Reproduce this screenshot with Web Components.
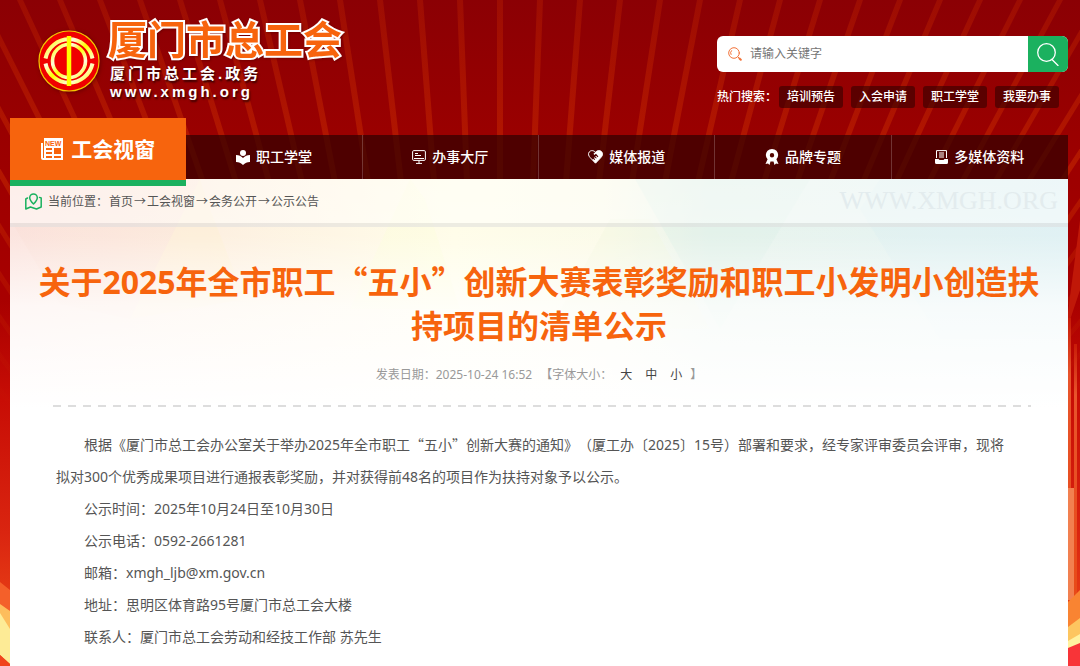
<!DOCTYPE html>
<html lang="zh-CN">
<head>
<meta charset="utf-8">
<meta name="viewport" content="width=device-width, initial-scale=1">
<title>厦门市总工会</title>
<style>
body {
    margin: 0;
    font: 12px/20px "Noto Sans", "Noto Sans CJK SC", sans-serif;
    text-spacing-trim: space-all;
    color: #555;
    background: #960000;
    --orange: #f7640d;
    --green: #1bb15f;
    --cjk: "Noto Sans CJK SC", sans-serif;
}
.cn { font-family: var(--cjk); }
</style>
</head>
<body>
<site-page>
    <site-logo slot="logo">
        厦门市总工会
        <span slot="sub">厦门市总工会.政务</span>
        <span slot="url">www.xmgh.org</span>
    </site-logo>
    <search-box slot="search" placeholder="请输入关键字"></search-box>
    <hot-words slot="search" label="热门搜索：" words="培训预告,入会申请,职工学堂,我要办事"></hot-words>
    <main-nav slot="nav">
        <nav-item icon="news" active>工会视窗</nav-item>
        <nav-item icon="reader">职工学堂</nav-item>
        <nav-item icon="monitor">办事大厅</nav-item>
        <nav-item icon="heart">媒体报道</nav-item>
        <nav-item icon="medal">品牌专题</nav-item>
        <nav-item icon="drawer">多媒体资料</nav-item>
    </main-nav>
    <crumb-bar label="当前位置：" path="首页,工会视窗,会务公开,公示公告">WWW.XMGH.ORG</crumb-bar>
    <notice-article>
        <span slot="title">关于2025年全市职工<span class="cn">“五小”</span>创新大赛表彰奖励和职工小发明小创造扶持项目的清单公示</span>
        <span slot="date">2025-10-24 16:52</span>
        <p>根据《厦门市总工会办公室关于举办2025年全市职工<span class="cn">“五小”</span>创新大赛的通知》（厦工办〔2025〕15号）部署和要求，经专家评审委员会评审，现将拟对300个优秀成果项目进行通报表彰奖励，并对获得前48名的项目作为扶持对象予以公示。</p>
        <p>公示时间：2025年10月24日至10月30日</p>
        <p>公示电话：0592-2661281</p>
        <p>邮箱：xmgh_ljb@xm.gov.cn</p>
        <p>地址：思明区体育路95号厦门市总工会大楼</p>
        <p>联系人：厦门市总工会劳动和经技工作部 苏先生</p>
    </notice-article>
</site-page>

<script>
const icons = {
    news: `<svg width="22" height="22" viewBox="0 0 22 22" fill="#fff">
        <path d="M0 5h2v15h1V0h19v22H2a2 2 0 0 1-2-2z"/>
        <path d="M5 10h6v2H5zM5 14h6v2H5zM5 18h6v2H5zM13 10h7v6h-7zM13 18h7v2h-7z" fill="#f7640d"/>
        <text x="4" y="8" font-family="Liberation Sans, sans-serif" font-size="7" font-weight="700" fill="#f7640d">NEW</text></svg>`,
    reader: `<svg width="14" height="15" viewBox="0 0 14 15" fill="#fff">
        <circle cx="7" cy="3" r="3"/><path d="M0 5c3 0 5 1 7 3 2-2 4-3 7-3v7c-3 0-5 1-7 3-2-2-4-3-7-3z"/></svg>`,
    monitor: `<svg width="14" height="14" viewBox="0 0 14 14" fill="none" stroke="#fff">
        <rect x=".6" y=".6" width="12.8" height="9.8" rx="1.2"/><path d="M3 3.5h3M3 5.5h6M2 8.5h10M7 10.5v3M4 13.4h6"/></svg>`,
    heart: `<svg width="15" height="14" viewBox="0 0 15 14">
        <path d="M7.5 2.3C5.8.3 2.8 0 1.3 1.9-.2 3.8.6 6 2.2 7.600l5.300 5.600 5.300-5.600c1.600-1.600 2.300-3.900.9-5.700C12.200 0 9.200.3 7.500 2.300z" fill="none" stroke="#fff"/>
        <path d="M5.500 3.800L8 1.600C9.500 0 12.500 0 13.900 2c1.300 1.900.6 4-1 5.600l-5.400 5.600-3.200-3.400 1-.9 1.200 1.100.7-.7-1.300-1.300.7-.7 1.500 1.300.7-.7-1.500-1.500.7-.7 1.700 1.500.7-.7-2.400-2.700-1.700 1.300z" fill="#fff"/></svg>`,
    medal: `<svg width="14" height="16" viewBox="0 0 14 16" fill="#fff">
        <path fill-rule="evenodd" d="M7 0l2.500.6 2 1.200 1.200 2 .5 2.200-.5 2.200-1.300 2L13.500 15l-2.500-.4L9.500 16 8.500 12.500h-3L4.500 16 3 14.600.5 15l2.100-4.800-1.300-2L.8 6l.5-2.200 1.200-2 2-1.200zM7 4a2.200 2.200 0 1 0 0 4.400A2.200 2.200 0 0 0 7 4z"/></svg>`,
    drawer: `<svg width="13" height="14" viewBox="0 0 13 14">
        <path d="M1.500 8V.6h10V8M4 3h5M4 5h5M4 7h5" fill="none" stroke="#fff"/>
        <path d="M0 9h3.500l1 1h4l1-1H13v3.500a1.500 1.500 0 0 1-1.500 1.500h-10A1.500 1.500 0 0 1 0 12.500z" fill="#fff"/></svg>`,
    pin: `<svg width="17" height="17" viewBox="0 0 17 17" fill="none" stroke="#1bb15f" stroke-width="1.500" stroke-linejoin="round" stroke-linecap="round">
        <path d="M8.500 11C6 8.500 4.700 6.800 4.700 4.700a3.800 3.800 0 0 1 7.600 0c0 2.100-1.300 3.800-3.800 6.300z"/>
        <path d="M2.500 5L.8 6v10l4.700-2 6 2 4.700-2V5l-1.700-.6"/></svg>`,
    lens: `<svg width="14" height="14" viewBox="0 0 14 14" fill="none" stroke="#f2733a" stroke-linecap="round">
        <circle cx="6" cy="6" r="5.300"/><path d="M3 7.500A3.200 3.200 0 0 1 3.500 3.600"/><path d="M10 10l1 1"/><path d="M11.500 11.500l1.300 1.300" stroke-width="2"/></svg>`,
    search: `<svg width="22" height="23" viewBox="0 0 22 23" fill="none" stroke="#fff" stroke-width="1.300" stroke-linecap="round">
        <circle cx="9.500" cy="9.500" r="8.800"/><path d="M15 16.500l6 6"/></svg>`,
    emblem: `<svg width="62" height="62" viewBox="0 0 62 62" fill="none">
        <defs><linearGradient id="gold" x1="0" y1="0" x2="1" y2="1"><stop offset="0" stop-color="#ff0"/><stop offset=".3" stop-color="#fffbe0"/><stop offset=".5" stop-color="#ff0"/><stop offset=".75" stop-color="#fffbe0"/><stop offset="1" stop-color="#ff0"/></linearGradient></defs>
        <circle cx="31" cy="31" r="30" fill="#f00000" stroke="#f5c800" stroke-width="1.200"/>
        <path d="M7.500 28.500A24 24 0 0 1 54.500 28.500M7.500 33.500A24 24 0 0 0 54.500 33.500" stroke="url(#gold)" stroke-width="4"/>
        <circle cx="31" cy="31" r="16.500" stroke="url(#gold)" stroke-width="3.600"/>
        <path d="M31 6v50" stroke="#ff0" stroke-width="4.500"/></svg>`
};

// Attaches an open shadow root with the given markup
function render(host, html) {
    if (!host.shadowRoot) {
        host.attachShadow({ mode: 'open' });
        host.shadowRoot.innerHTML = html;
    }
}

// Light rays that run together far below the header
function rays() {
    let out = '';
    for (let x = -780; x <= 1780; x += 40) {
        const end = 500 + (x - 500) * 0.6;
        out += `<path d="M${x - 3} 0h6L${end + 3} 416h-6z"/>`;
    }
    return out;
}

class SiteBackdrop extends HTMLElement {
    connectedCallback() {
        render(this, `
<style>
:host { display: block; position: absolute; inset: 0; z-index: -1; overflow: hidden; }
svg { display: block; width: 100%; height: 100%; }
</style>
<svg viewBox="0 0 1080 666" preserveAspectRatio="none" aria-hidden="true">
    <defs>
        <linearGradient id="sky" x2="0" y2="1">
            <stop offset="0" stop-color="#8b0004"/><stop offset=".2" stop-color="#9a0000"/>
            <stop offset=".45" stop-color="#a80000"/><stop offset=".6" stop-color="#c80d05"/>
            <stop offset=".8" stop-color="#da2510"/><stop offset="1" stop-color="#f0501a"/>
        </linearGradient>
        <linearGradient id="fade" gradientUnits="userSpaceOnUse" x1="0" y1="0" x2="0" y2="416">
            <stop offset="0" stop-color="#c62a00" stop-opacity=".3"/><stop offset=".4" stop-color="#c62a00" stop-opacity=".55"/>
            <stop offset="1" stop-color="#c62a00" stop-opacity="0"/>
        </linearGradient>
        <linearGradient id="tower" x2="0" y2="1">
            <stop offset="0" stop-color="#c81c08"/><stop offset=".2" stop-color="#e8552c"/><stop offset="1" stop-color="#e84a18"/>
        </linearGradient>
    </defs>
    <rect width="1080" height="666" fill="url(#sky)"/>
    <g fill="url(#fade)">${rays()}</g>
    <path d="M0 582l10 8v25L0 607z" fill="#f4602a"/>
    <path d="M0 604l10 7v24L0 624z" fill="#fdbd5c"/>
    <path d="M0 613l10 16v35L0 655z" fill="#fdeb96"/>
    <path d="M0 655l10 9v2H0z" fill="#f0441c"/>
    <path d="M1080 220l-12 92v14l12-36z" fill="#c01808"/>
    <path d="M1068 318h3V600h-3z" fill="url(#tower)"/>
    <path d="M1074 344h3V600h-3z" fill="url(#tower)"/>
    <path d="M1068 488h6V600h-6z" fill="#f28050"/>
    <path d="M1068 602l12-12v44l-12 8z" fill="#f98432"/>
    <path d="M1068 627l12-9v25l-12 9z" fill="#fdc660"/>
    <path d="M1068 641l12-7v13l-12 6z" fill="#fff2a0"/>
    <path d="M1068 648l12-5v23h-12z" fill="#f83438"/>
</svg>`);
    }
}

class SitePage extends HTMLElement {
    connectedCallback() {
        render(this, `
<style>
:host { display: flex; flex-direction: column; position: relative; z-index: 0; box-sizing: border-box; min-height: 100vh; padding: 0 12px 0 10px; }
header { display: flex; justify-content: space-between; box-sizing: border-box; height: 135px; }
.tools { width: 351px; padding-top: 36px; }
main { flex: 1; position: relative; background: #fff; }
.tint { position: absolute; inset: 0 0 auto 0; width: 100%; height: 230px; }
.content { position: relative; }
</style>
<site-backdrop></site-backdrop>
<header>
    <slot name="logo"></slot>
    <div class="tools"><slot name="search"></slot></div>
</header>
<slot name="nav"></slot>
<main>
    <svg class="tint" viewBox="0 0 1058 230" preserveAspectRatio="none" aria-hidden="true">
        <defs>
            <linearGradient id="hue">
                <stop offset="0" stop-color="#fbe0da"/><stop offset=".2" stop-color="#fdeedc"/><stop offset=".42" stop-color="#fffde6"/>
                <stop offset=".56" stop-color="#fbfae6"/><stop offset=".66" stop-color="#e6f2ea"/><stop offset="1" stop-color="#dff1f3"/>
            </linearGradient>
            <linearGradient id="white" x2="0" y2="1">
                <stop offset="0" stop-color="#fff" stop-opacity="0"/><stop offset=".25" stop-color="#fff" stop-opacity=".15"/>
                <stop offset=".55" stop-color="#fff" stop-opacity=".75"/><stop offset="1" stop-color="#fff"/>
            </linearGradient>
        </defs>
        <rect width="1058" height="230" fill="url(#hue)"/>
        <path d="M0 40L50 125 120 140 190 0H0z" fill="#fbd0c0" opacity=".15"/>
        <path d="M190 0L120 140 235 120 200 30z" fill="#fff0c8" opacity=".3"/>
        <path d="M400 0L340 130H450L415 20z" fill="#fbffd0" opacity=".3"/>
        <path d="M625 0L710 150 800 0z" fill="#d2ebe2" opacity=".3"/>
        <path d="M600 40L540 150h160L640 40z" fill="#edf5d8" opacity=".3"/>
        <path d="M850 30L930 160H1058V0H870z" fill="#cdeaf0" opacity=".2"/>
        <rect width="1058" height="230" fill="url(#white)"/>
    </svg>
    <div class="content"><slot></slot></div>
</main>`);
    }
}

class SiteLogo extends HTMLElement {
    connectedCallback() {
        render(this, `
<style>
:host { display: flex; gap: 8px; align-items: flex-start; padding: 12px 0 0 28px; color: #fff; white-space: nowrap; }
svg { margin-top: 18px; filter: drop-shadow(1px 1px 2px #4008); }
h1 {
    margin: 0 0 3px; font: 700 39px/50px var(--cjk); color: var(--orange);
    -webkit-text-stroke: 4px #fff; paint-order: stroke fill; stroke-linejoin: round; filter: drop-shadow(1px 1px 1px #4006);
}
p { margin: 0 0 0 2px; font: 700 15px/18px "Liberation Sans", "Noto Sans CJK SC", sans-serif; letter-spacing: 3px; text-shadow: 1px 2px 2px #300; }
</style>
${icons.emblem}
<div>
    <h1><slot></slot></h1>
    <p><slot name="sub"></slot></p>
    <p><slot name="url"></slot></p>
</div>`);
    }
}

class SearchBox extends HTMLElement {
    connectedCallback() {
        render(this, `
<style>
:host { display: block; }
form { display: flex; height: 36px; border-radius: 6px; overflow: hidden; background: #fff; }
label { display: flex; align-items: center; padding: 0 8px 0 11px; }
input { flex: 1; min-width: 0; border: 0; padding: 0; outline: 0; font: inherit; color: #555; background: none; }
input::placeholder { color: #757575; }
button { display: flex; align-items: center; justify-content: center; width: 40px; border: 0; padding: 0; background: var(--green); }
</style>
<form>
    <label for="key" aria-label="${this.getAttribute('placeholder')}">${icons.lens}</label>
    <input id="key" type="text" placeholder="${this.getAttribute('placeholder')}">
    <button type="button" aria-label="搜索">${icons.search}</button>
</form>`);
    }
}

class HotWords extends HTMLElement {
    connectedCallback() {
        const words = this.getAttribute('words').split(',');
        render(this, `
<style>
:host { display: flex; align-items: center; justify-content: space-between; margin: 14px 9px 0 0; line-height: 22px; font-weight: 500; color: #fff; white-space: nowrap; }
a { padding: 0 8px; border-radius: 3px; background: #3009; color: inherit; text-decoration: none; }
span { margin-right: -6px; }
</style>
<span>${this.getAttribute('label')}</span>
${words.map((word) => `<a href="#">${word}</a>`).join('')}`);
    }
}

class MainNav extends HTMLElement {
    connectedCallback() {
        render(this, `
<style>
:host { display: grid; grid-template-columns: repeat(6, 1fr); position: relative; z-index: 1; height: 44px; background: rgba(50, 0, 0, .73); }
</style>
<slot></slot>`);
    }
}

class NavItem extends HTMLElement {
    connectedCallback() {
        render(this, `
<style>
:host { display: flex; border-right: 1px solid #fff3; }
:host(:last-child) { border-right: 0; }
:host([active]) { margin: -17px 0 -7px; border-right: 0; border-bottom: 6px solid var(--green); background: var(--orange); }
a { flex: 1; display: flex; align-items: center; justify-content: center; gap: 6px; font-size: 14px; font-weight: 500; color: #fff; text-decoration: none; white-space: nowrap; }
:host([active]) a { gap: 8px; font-size: 21px; font-weight: 700; }
</style>
<a href="#">${icons[this.getAttribute('icon')]}<slot></slot></a>`);
    }
}

class CrumbBar extends HTMLElement {
    connectedCallback() {
        const path = this.getAttribute('path').split(',');
        render(this, `
<style>
:host { display: flex; align-items: center; justify-content: space-between; height: 44px; padding: 0 10px 0 15px; border-bottom: 4px solid #00000012; background: #ffffff80; }
nav { display: flex; align-items: center; gap: 1px; font-family: var(--cjk); }
svg { margin-right: 5px; }
a { color: inherit; text-decoration: none; }
.mark { font: 26px/44px "Liberation Serif", serif; color: #e3ecee; }
</style>
<nav>${icons.pin}<span>${this.getAttribute('label')}</span>${path.map((step) => `<a href="#">${step}</a>`).join('<span>→</span>')}</nav>
<span class="mark"><slot></slot></span>`);
    }
}

class NoticeArticle extends HTMLElement {
    connectedCallback() {
        render(this, `
<style>
:host { display: block; padding: 31px 20px 0; }
h2 { margin: 0; font-size: 32px; line-height: 44px; font-weight: 700; text-align: center; color: var(--orange); }
.meta { display: flex; justify-content: center; gap: 8px; margin-top: 17px; color: #999; }
.sizes { display: flex; gap: 13px; }
button { border: 0; padding: 0; background: none; font: inherit; color: #444; }
hr { height: 2px; margin: 20px 17px 0 23px; border: 0; background: repeating-linear-gradient(90deg, #ddd 0 8px, transparent 8px 15px); }
.body { padding: 21px 34px 0 26px; font-size: 14px; line-height: 32px; }
::slotted(p) { margin: 0; text-indent: 28px; }
</style>
<h2><slot name="title"></slot></h2>
<div class="meta">
    <span>发表日期：<slot name="date"></slot></span>
    <span>【字体大小：</span>
    <span class="sizes"><button type="button">大</button><button type="button">中</button><button type="button">小</button></span>
    <span>】</span>
</div>
<hr>
<div class="body"><slot></slot></div>`);
    }
}

customElements.define('site-backdrop', SiteBackdrop);
customElements.define('site-page', SitePage);
customElements.define('site-logo', SiteLogo);
customElements.define('search-box', SearchBox);
customElements.define('hot-words', HotWords);
customElements.define('main-nav', MainNav);
customElements.define('nav-item', NavItem);
customElements.define('crumb-bar', CrumbBar);
customElements.define('notice-article', NoticeArticle);
</script>
</body>
</html>
